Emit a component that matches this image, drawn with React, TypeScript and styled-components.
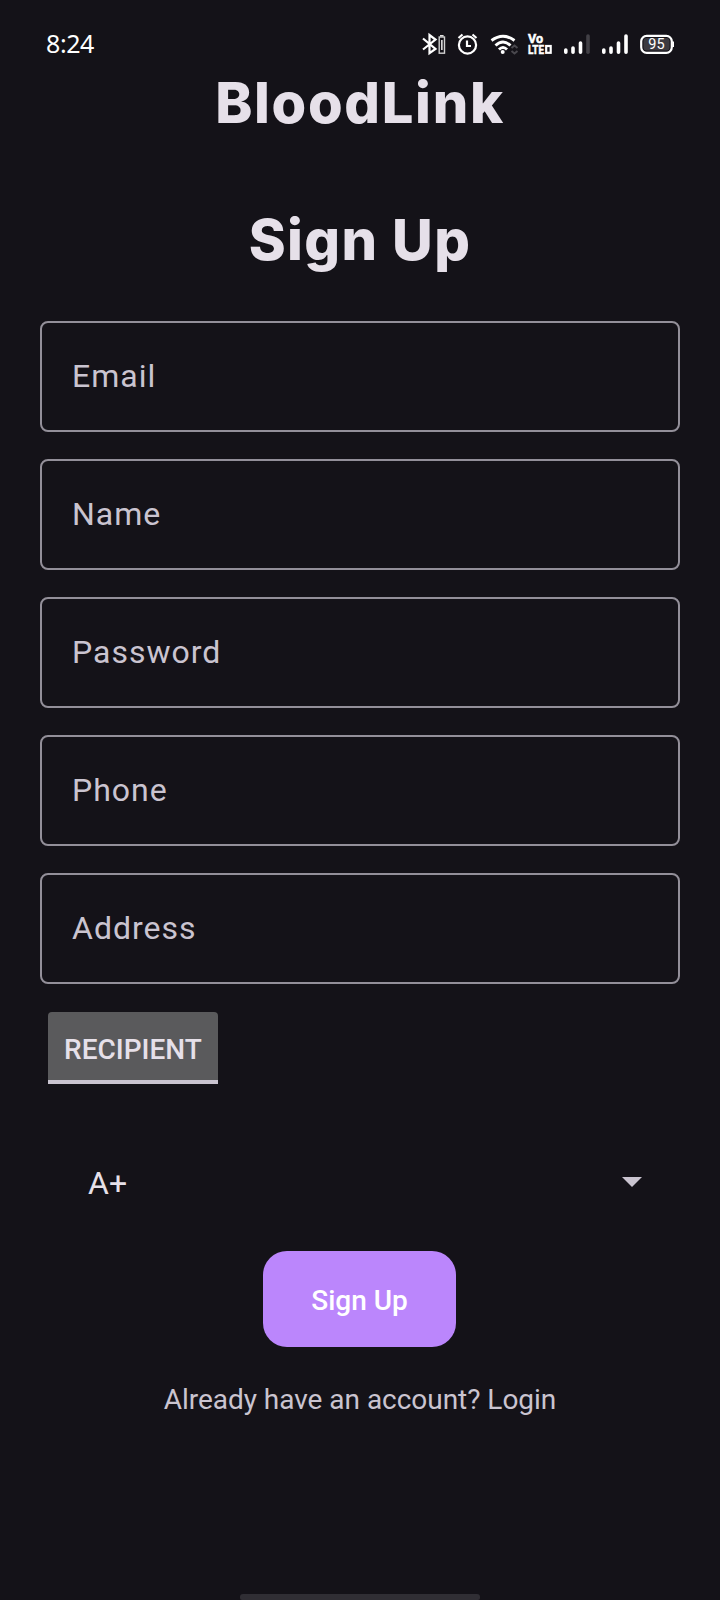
import React from "react";
import styled, { createGlobalStyle } from "styled-components";

const GlobalStyle = createGlobalStyle`
  * { box-sizing: border-box; }
  body { margin: 0; background: #141218; font-family: Roboto, "Liberation Sans", sans-serif; }
`;

const Screen = styled.main`
  width: 720px;
  height: 1600px;
  display: flex;
  flex-direction: column;
  align-items: center;
  background: #141218;
  color: #e6e0e9;
  overflow: hidden;
`;

const StatusBar = styled.header`
  width: 100%;
  height: 72px;
  padding: 15px 46px 0 46px;
  display: flex;
  justify-content: space-between;
  color: #fff;
`;

const Clock = styled.time`
  font: 400 25px/56px "Noto Sans", sans-serif;
  letter-spacing: -0.4px;
`;

const StatusIcons = styled.svg`
  width: 256px;
  height: 32px;
  margin-top: 13px;
`;

const Heading = styled.h1<{ $top: number; $tracking: number }>`
  margin: ${(p) => p.$top}px 0 0;
  height: 84px;
  font: 800 56px/84px Inter, sans-serif;
  letter-spacing: ${(p) => p.$tracking}px;
  white-space: nowrap;
`;

const Form = styled.form`
  width: 640px;
  margin-top: 39px;
  display: flex;
  flex-direction: column;
  gap: 27px;
`;

const Field = styled.input`
  height: 111px;
  padding: 0 30px 2px;
  border: 2px solid #938f99;
  border-radius: 8px;
  background: transparent;
  color: #e6e0e9;
  font: 400 32px/40px Roboto, sans-serif;
  letter-spacing: 1px;
  outline: none;
  &::placeholder { color: #cac4d0; opacity: 1; }
`;

const RoleToggle = styled.button`
  align-self: flex-start;
  width: 170px;
  height: 72px;
  margin: 1px 0 0 8px;
  padding: 7px 0 0;
  border: 0;
  border-bottom: 4px solid #cac4d0;
  border-radius: 4px 4px 0 0;
  background: #5a5a5c;
  color: #e6e0e9;
  font: 500 28px/32px Roboto, sans-serif;
`;

const GroupPicker = styled.div`
  height: 84px;
  margin-top: 29px;
  padding: 0 38px 0 48px;
  display: flex;
  align-items: center;
  justify-content: space-between;
  font-size: 32px;
  line-height: 40px;
`;

const GroupValue = styled.span`
  padding-top: 2px;
`;

const Caret = styled.svg`
  width: 20px;
  height: 10px;
`;

const SubmitButton = styled.button`
  width: 193px;
  height: 96px;
  margin-right: 1px;
  padding: 4px 0 0;
  border: 0;
  border-radius: 24px;
  background: #bb86fc;
  color: #fff;
  align-self: center;
  font: 500 28px/32px Roboto, sans-serif;
`;

const LoginHint = styled.p`
  margin: 10px 0 0;
  text-align: center;
  color: #cac4d0;
  font-size: 28px;
  line-height: 32px;
  letter-spacing: -0.03px;
`;

const GestureBar = styled.div`
  width: 240px;
  height: 6px;
  margin-top: auto;
  border-radius: 3px 3px 2px 2px;
  background: #302e34;
`;

const fields = ["Email", "Name", "Password", "Phone", "Address"];

function SystemIcons() {
  return (
    <StatusIcons viewBox="418 28 256 32" fill="none" stroke="#fff">
      <path d="M423 38.500 435.500 49l-6 4.200V35l6 4.500L423 49.500" strokeWidth="2.200" />
      <rect x="439.200" y="37" width="5.300" height="16.200" stroke="#d0d0d0" strokeWidth="1.400" />
      <path d="M440 35.800h3.600M441.850 40v10" stroke="#e0e0e0" strokeWidth="1.600" />
      <circle cx="467.500" cy="45" r="8.600" strokeWidth="2.200" />
      <path d="M467 40.500v5.500h4M458.500 38l4-3.500M476.500 38l-4-3.500" strokeWidth="2.200" />
      <path d="M491.500 40.500Q503 32 514.500 40.500M495.500 45.500Q503 38.500 510.500 45.500M499 49.500Q503 45.500 507 49.500" strokeWidth="2.900" />
      <circle cx="502.700" cy="52" r="2" fill="#fff" stroke="none" />
      <path d="m511.500 48 3-2.500 3 2.500M511.500 51l3 2.500 3-2.500" stroke="#4a484e" strokeWidth="2" />
      <g fill="#fff" strokeWidth="0.500" fontFamily="Roboto" fontWeight="700" fontSize="12">
        <text x="528" y="42.800" textLength="15" lengthAdjust="spacingAndGlyphs">Vo</text>
        <text x="528" y="53.800" textLength="16" lengthAdjust="spacingAndGlyphs">LTE</text>
      </g>
      <rect x="546.200" y="46" width="4.500" height="6.800" strokeWidth="2.200" />
      <g strokeWidth="3.600" strokeLinecap="round">
        <path d="M565.800 50v2.300M573 48v4.300M580.500 43v9.300M603.800 50v2.300M611 48v4.300M618.500 43v9.300M626 36v16.300" />
        <path d="M588 36v16.300" stroke="#424046" />
      </g>
      <rect x="641.200" y="35.800" width="30.600" height="17" rx="5.500" strokeWidth="2.200" />
      <rect x="643.500" y="38" width="26" height="12.600" rx="3" fill="#3c3a40" stroke="none" />
      <path d="M673.200 41.500v5.500" strokeWidth="1.600" />
      <text x="656.500" y="49.300" fill="#fff" stroke="none" fontFamily="Roboto" fontSize="14.500" textAnchor="middle">95</text>
    </StatusIcons>
  );
}

export default function App() {
  return (
    <Screen>
      <GlobalStyle />
      <StatusBar>
        <Clock>8:24</Clock>
        <SystemIcons />
      </StatusBar>
      <Heading $top={-11} $tracking={1.7}>BloodLink</Heading>
      <Heading as="h2" $top={53} $tracking={1.4}>Sign Up</Heading>
      <Form>
        {fields.map((name) => (
          <Field key={name} placeholder={name} aria-label={name} type={name === "Password" ? "password" : "text"} />
        ))}
        <RoleToggle type="button">RECIPIENT</RoleToggle>
        <GroupPicker>
          <GroupValue>A+</GroupValue>
          <Caret viewBox="0 0 20 10"><path d="M0 0h20L10 10z" fill="#cac4d0" /></Caret>
        </GroupPicker>
        <SubmitButton type="button">Sign Up</SubmitButton>
        <LoginHint>Already have an account? Login</LoginHint>
      </Form>
      <GestureBar />
    </Screen>
  );
}
